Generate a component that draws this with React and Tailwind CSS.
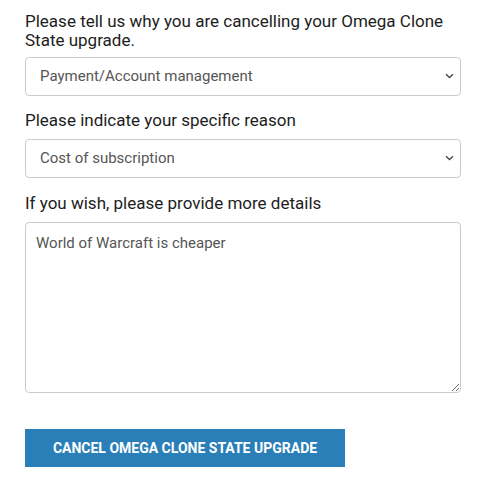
import React, { useState } from "react";

const font = { fontFamily: "Roboto, 'Liberation Sans', sans-serif" };

const Field = ({ label, children, className = "" }) => (
  <div className={className}>
    <label className="block text-[17px] leading-[19px] text-[#1d1d1d]">{label}</label>
    {children}
  </div>
);

const Select = ({ value, onChange, options, className = "" }) => (
  <div className={`relative ${className}`}>
    <select
      value={value}
      onChange={(e) => onChange(e.target.value)}
      className="appearance-none block w-full h-[39px] pl-[14px] pr-8 border border-[#cccccc] rounded-[4px] bg-white text-[15px] text-[#555555] outline-none"
    >
      {options.map((o) => (
        <option key={o}>{o}</option>
      ))}
    </select>
    <svg
      className="pointer-events-none absolute right-[7px] top-[16px]"
      width="9"
      height="6"
      viewBox="0 0 9 6"
      fill="none"
    >
      <path d="M1 1.2l3.5 3.3L8 1.2" stroke="#444" strokeWidth="1.3" />
    </svg>
  </div>
);

export default function App() {
  const [reason, setReason] = useState("Payment/Account management");
  const [specific, setSpecific] = useState("Cost of subscription");
  const [details, setDetails] = useState("World of Warcraft is cheaper");

  return (
    <div className="bg-white min-h-[479px] pl-[25px] pt-[12px]" style={font}>
      <div className="w-[436px]">
        <Field label="Please tell us why you are cancelling your Omega Clone State upgrade.">
          <Select
            value={reason}
            onChange={setReason}
            options={["Payment/Account management", "Gameplay", "Other"]}
            className="mt-[7px]"
          />
        </Field>

        <Field label="Please indicate your specific reason" className="mt-[15px]">
          <Select
            value={specific}
            onChange={setSpecific}
            options={["Cost of subscription", "Payment problems", "Other"]}
            className="mt-[9px]"
          />
        </Field>

        <Field label="If you wish, please provide more details" className="mt-[16px]">
          <textarea
            value={details}
            onChange={(e) => setDetails(e.target.value)}
            className="mt-[9px] block w-full h-[171px] px-[10px] py-[9px] border border-[#cccccc] rounded-[4px] bg-white text-[15px] text-[#555555] outline-none"
          />
        </Field>

        <button
          type="button"
          className="mt-[36px] block w-[320px] h-[38px] bg-[#2a7fb8] text-white font-bold uppercase text-[14px]"
        >
          Cancel Omega Clone State upgrade
        </button>
      </div>
    </div>
  );
}
